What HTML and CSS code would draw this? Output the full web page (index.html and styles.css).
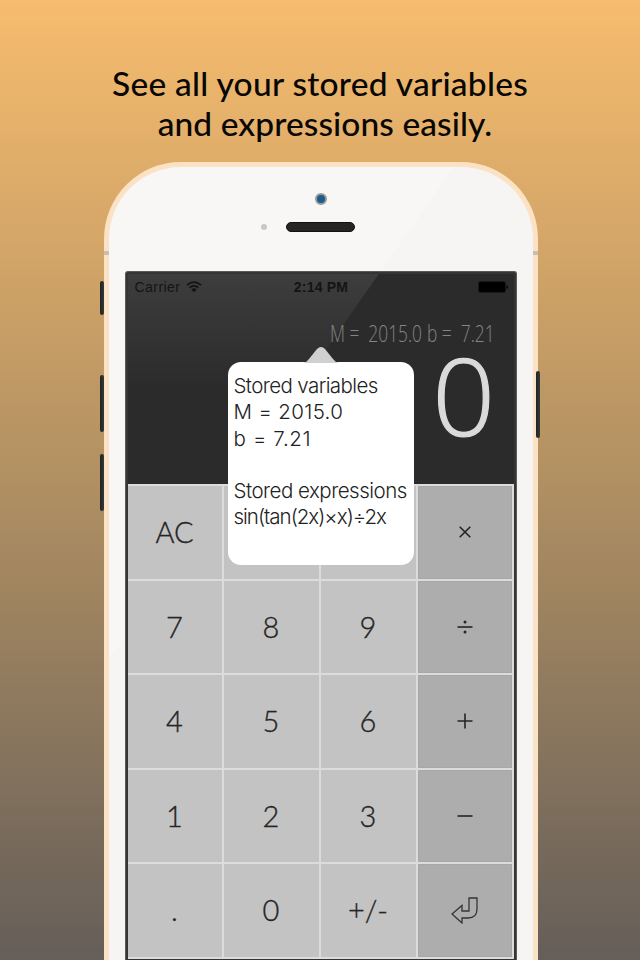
FILE: index.html
```html
<!DOCTYPE html>
<html lang="en">
<head>
<meta charset="utf-8">
<title>Calculator</title>
<link rel="stylesheet" href="styles.css">
</head>
<body>
<main class="poster">
  <h1 class="title"><span class="line-one">See all your stored variables</span><span class="line-two">and expressions easily.</span></h1>
  <section class="phone">
    <i class="side mute"></i><i class="side up"></i><i class="side down"></i><i class="side power"></i>
    <i class="antenna left"></i><i class="antenna right"></i>
    <div class="face">
      <i class="camera"></i>
      <div class="earpiece"><i class="sensor"></i><i class="speaker"></i></div>
      <div class="screen">
        <div class="display">
          <div class="status">
            <span class="carrier"><span class="carrier-name">Carrier</span>
              <svg class="wifi" width="16" height="12" viewBox="0 0 16 12"><g fill="none" stroke="#141414" stroke-width="1.7"><path d="M1 4.1Q8-2 15 4.1"/><path d="M3.5 6.7Q8 2.9 12.5 6.7"/></g><path d="M5.3 8.4Q8 6.3 10.7 8.4L8 11.2Z" fill="#141414"/></svg>
            </span>
            <span class="clock">2:14 PM</span>
            <svg class="battery" width="30" height="12" viewBox="0 0 30 12"><rect x=".5" y=".5" width="27" height="11" rx="2" fill="#000" stroke="#181818"/><path d="M28.5 4q1.5 .3 1.5 2t-1.5 2z" fill="#000"/></svg>
          </div>
          <div class="memory"><span class="mem-m">M =&nbsp; 2015.0</span><span class="mem-b">b =&nbsp; 7.21</span></div>
          <div class="result"><span>0</span></div>
        </div>
        <div class="keys">
          <b>AC</b><b></b><b></b><b class="op"><svg width="12" height="12" viewBox="0 0 12 12"><path d="M.7.7l10.6 10.6M11.3.7L.7 11.3"/></svg></b>
          <b>7</b><b>8</b><b>9</b><b class="op"><svg width="16" height="14" viewBox="0 0 16 14"><path d="M.5 7h15"/><g class="dots"><circle cx="8" cy="2" r="1.5"/><circle cx="8" cy="12" r="1.5"/></g></svg></b>
          <b>4</b><b>5</b><b>6</b><b class="op"><svg width="16" height="16" viewBox="0 0 16 16"><path d="M.5 8h15M8 .5v15"/></svg></b>
          <b>1</b><b>2</b><b>3</b><b class="op"><svg width="16" height="4" viewBox="0 0 16 4"><path d="M.5 2h15"/></svg></b>
          <b>.</b><b>0</b><b class="sign">+/-</b><b class="op"><svg class="enter" width="27" height="27" viewBox="0 0 27 27"><path d="M18 1h8v11q0 9-9 9h-6v5L1 17l10-8.5V14h7Z"/></svg></b>
        </div>
        <div class="popover">
          <svg class="arrow" width="36" height="17" viewBox="0 0 36 17"><path d="M0 17Q4 16 6 13L14 3Q18-1 22 3L30 13Q32 16 36 17Z" fill="#d0d0d0"/></svg>
          <p class="p1">Stored variables</p><p class="p2">M = 2015.0</p><p class="p3">b = 7.21</p><p>&nbsp;</p><p class="p4">Stored expressions</p><p class="p5">sin(tan(2x)×x)÷2x</p>
        </div>
      </div>
    </div>
  </section>
</main>
</body>
</html>
```
FILE: styles.css
```css
* { box-sizing: border-box; }
body { margin: 0; }
.poster {
  height: 960px;
  overflow: hidden;
  display: flex;
  flex-direction: column;
  align-items: center;
  background: linear-gradient(#f7bc6e, #b19062 50%, #655e59);
}
.title {
  margin: 64px 0 0;
  height: 98px;
  flex: none;
  display: flex;
  flex-direction: column;
  align-items: center;
  font: 500 33.5px/39.5px Lato, sans-serif;
  color: #080704;
  white-space: nowrap;
}
.line-one { letter-spacing: .25px; }
.line-two { letter-spacing: .08px; padding-left: 10px; }
.phone {
  position: relative;
  flex: none;
  width: 434px;
  height: 860px;
  margin-left: 1px;
  padding: 5px;
  border-radius: 77px 77px 0 0;
  background: #fbe2c4;
}
.face {
  height: 855px;
  border-radius: 72px 72px 0 0;
  background: linear-gradient(125deg, #f8f7f6 0 33.7%, #f6f5f4 33.7%);
  display: flex;
  flex-direction: column;
  align-items: center;
  padding-top: 26px;
}
.side {
  position: absolute;
  left: -4px;
  width: 4px;
  height: 57px;
  border-radius: 2px;
  background: linear-gradient(90deg, #202322, #343a3a);
}
.mute { top: 119px; height: 34px; }
.up { top: 213px; }
.down { top: 292px; }
.power { left: 432px; top: 209px; height: 67px; }
.antenna { position: absolute; top: 89px; width: 5px; height: 4px; background: #c7bfb4; }
.antenna.left { left: 0; }
.antenna.right { right: 0; }
.camera {
  width: 12px;
  height: 12px;
  border: 2.5px solid #99999a;
  border-radius: 50%;
  background: #1b5d8b;
}
.earpiece {
  display: flex;
  align-items: center;
  gap: 18.5px;
  height: 10px;
  margin: 17px 25px 0 0;
}
.sensor { width: 6px; height: 6px; border-radius: 50%; background: #c9c9c9; }
.speaker { width: 69px; height: 10px; border-radius: 5px; background: #252525; border: 1px solid #111; }
.screen {
  position: relative;
  width: 392px;
  height: 730px;
  margin-top: 39px;
  padding: 2px 2px 0 2px;
  border-radius: 3px 3px 0 0;
  background: #343534;
  border: 1px solid #595958;
  border-bottom: 0;
  flex: none;
}
.display {
  height: 210px;
  background:
    linear-gradient(125deg, transparent 0 47%, #2b2b2b 47.1%),
    linear-gradient(#3d3d3d, #2b2b2b 55%);
  display: flex;
  flex-direction: column;
}
.status {
  display: grid;
  grid-template-columns: 1fr auto 1fr;
  align-items: center;
  height: 26px;
  padding: 0 6px 1px 7px;
  font: 14px/20px "Liberation Sans", sans-serif;
  color: #141414;
}
.carrier { display: flex; align-items: center; gap: 6px; letter-spacing: .45px; }
.clock { font-weight: 700; letter-spacing: .2px; }
.battery { justify-self: end; }
.memory {
  display: flex;
  justify-content: flex-end;
  height: 24px;
  margin-top: 21px;
  font: 300 23px/24px "Open Sans", sans-serif;
  color: #858585;
  white-space: nowrap;
}
.mem-m, .mem-b { transform: scaleX(.755); transform-origin: right; }
.mem-m { margin-right: -17px; }
.mem-b { margin-right: 19px; }
.result {
  align-self: flex-end;
  margin: 2px 18px 0 0;
  font: 300 107px/96px "Open Sans", sans-serif;
  -webkit-text-stroke: 1.2px #dadada;
  color: #dadada;
}
.result span { display: block; transform: scaleX(1.03); transform-origin: right; }
.keys {
  display: grid;
  grid-template-columns: 94px 95px 95px 94px;
  grid-auto-rows: 92.5px;
  gap: 2px;
  padding: 2px 2px 2px 0;
  background: #dcdcdc;
}
.keys b {
  display: flex;
  align-items: center;
  justify-content: center;
  font: 300 29px/34px Lato, sans-serif;
  -webkit-text-stroke: .35px #252525;
  color: #252525;
  background: #c3c3c3;
}
.keys .op { background: #adadad; border: 1px solid #a7a7a7; }
.op svg { fill: none; stroke: #252525; stroke-width: 1.6; }
.op .dots { fill: #252525; stroke: none; }
.op .enter { stroke-width: 1.3; stroke: #353535; }
.popover {
  position: absolute;
  left: 102px;
  top: 90px;
  width: 186px;
  height: 203px;
  padding: 11px 6px;
  border-radius: 13px;
  background: #fff;
  color: #222;
  font: 300 20.5px/26.3px Inter, sans-serif;
  white-space: nowrap;
}
.popover p { margin: 0; }
.p1 { letter-spacing: -.6px; }
.p2 { letter-spacing: .35px; }
.p3 { letter-spacing: .65px; }
.p4 { letter-spacing: -.5px; }
.p5 { letter-spacing: -1px; }
.arrow { position: absolute; left: 75px; top: -16px; }
```
